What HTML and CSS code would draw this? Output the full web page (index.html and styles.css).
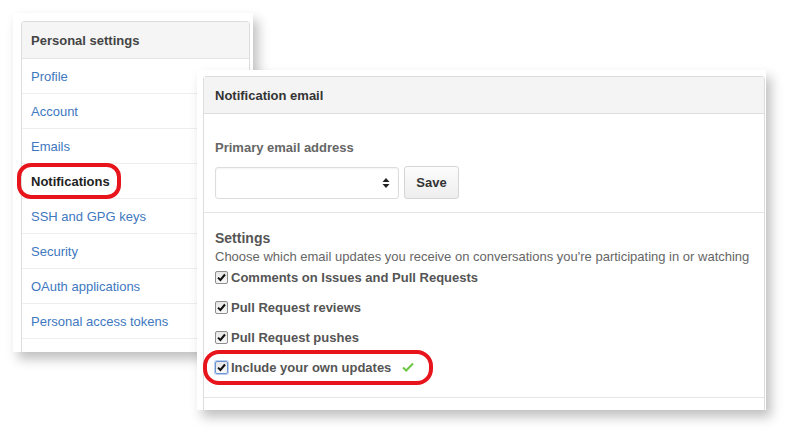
FILE: index.html
```html
<!DOCTYPE html>
<html>
<head>
<meta charset="utf-8">
<link rel="stylesheet" href="styles.css">
</head>
<body>
<div class="canvas">
  <div class="card card-left">
    <nav class="menu">
      <div class="menu-head">Personal settings</div>
      <a class="menu-item">Profile</a>
      <a class="menu-item">Account</a>
      <a class="menu-item">Emails</a>
      <a class="menu-item selected">Notifications</a>
      <a class="menu-item">SSH and GPG keys</a>
      <a class="menu-item">Security</a>
      <a class="menu-item">OAuth applications</a>
      <a class="menu-item">Personal access tokens</a>
      <a class="menu-item"></a>
    </nav>
  </div>

  <div class="card card-right">
    <div class="box">
      <div class="box-head">Notification email</div>
      <div class="box-section first">
        <div class="label">Primary email address</div>
        <div class="form-row">
          <div class="select">
            <svg class="updown" width="8" height="12" viewBox="0 0 8 12"><path d="M4 1 L7.5 5 H0.5 Z M4 11 L7.5 7 H0.5 Z" fill="#222"/></svg>
          </div>
          <button class="btn">Save</button>
        </div>
      </div>
      <div class="box-section second">
        <div class="sec-title">Settings</div>
        <div class="note">Choose which email updates you receive on conversations you're participating in or watching</div>
        <div class="check-row"><span class="cb"><svg width="9" height="9" viewBox="0 0 9 9"><path d="M1 4.6 L3.4 7 L8 1.5" stroke="#111" stroke-width="2" fill="none"/></svg></span>Comments on Issues and Pull Requests</div>
        <div class="check-row"><span class="cb"><svg width="9" height="9" viewBox="0 0 9 9"><path d="M1 4.6 L3.4 7 L8 1.5" stroke="#111" stroke-width="2" fill="none"/></svg></span>Pull Request reviews</div>
        <div class="check-row"><span class="cb"><svg width="9" height="9" viewBox="0 0 9 9"><path d="M1 4.6 L3.4 7 L8 1.5" stroke="#111" stroke-width="2" fill="none"/></svg></span>Pull Request pushes</div>
        <div class="check-row"><span class="cb focus"><svg width="9" height="9" viewBox="0 0 9 9"><path d="M1 4.6 L3.4 7 L8 1.5" stroke="#111" stroke-width="2" fill="none"/></svg></span>Include your own updates<svg class="ok" width="12" height="10" viewBox="0 0 12 10"><path d="M1 5.5 L4.2 8.5 L11 1.5" stroke="#6cc644" stroke-width="2" fill="none"/></svg></div>
      </div>
      <div class="box-section third"></div>
    </div>
  </div>

  <div class="mark mark-notif"></div>
  <div class="mark mark-include"></div>
</div>
</body>
</html>
```

FILE: styles.css
```css
* { box-sizing: border-box; }
html, body {
  margin: 0;
  padding: 0;
  background: #fff;
  font-family: "Liberation Sans", Arial, sans-serif;
  font-size: 13px;
}
.canvas {
  position: relative;
  width: 786px;
  height: 431px;
  overflow: hidden;
}
.card {
  position: absolute;
  background: #fff;
  overflow: hidden;
  box-shadow: 5px 7px 11px rgba(0, 0, 0, 0.25);
}
.card-left {
  left: 13px;
  top: 13px;
  width: 240px;
  height: 339px;
  padding: 8px 3px 0 8px;
}
.menu {
  display: flex;
  flex-direction: column;
  border: 1px solid #ddd;
  border-radius: 3px 3px 0 0;
}
.menu-head {
  height: 37px;
  padding: 0 9px;
  display: flex;
  align-items: center;
  background: #f5f5f5;
  border-bottom: 1px solid #e5e5e5;
  font-weight: bold;
  color: #444;
  font-size: 13px;
}
.menu-item {
  height: 35px;
  padding: 0 9px;
  display: flex;
  align-items: center;
  border-bottom: 1px solid #eee;
  color: #4078c0;
  text-decoration: none;
  flex: none;
}
.menu-item.selected {
  font-weight: bold;
  color: #222;
}
.card-right {
  left: 197px;
  top: 70px;
  width: 569px;
  height: 340px;
  padding: 6px 1px 0 6px;
}
.box {
  border: 1px solid #ddd;
  border-radius: 3px 3px 0 0;
}
.box-head {
  height: 37px;
  padding: 0 11px;
  display: flex;
  align-items: center;
  background: #f4f4f4;
  border-bottom: 1px solid #ddd;
  font-weight: bold;
  color: #333;
}
.box-section {
  padding: 0 11px;
  border-bottom: 1px solid #e5e5e5;
}
.box-section.first {
  height: 99px;
  padding-top: 26px;
}
.label {
  font-weight: bold;
  color: #666;
  height: 16px;
  line-height: 16px;
}
.form-row {
  display: flex;
  align-items: center;
  gap: 5px;
  margin-top: 10px;
}
.select {
  width: 184px;
  height: 32px;
  border: 1px solid #ddd;
  border-radius: 3px;
  display: flex;
  align-items: center;
  justify-content: flex-end;
  padding-right: 8px;
  box-shadow: inset 0 1px 2px rgba(0,0,0,0.05);
}
.btn {
  width: 55px;
  height: 33px;
  border: 1px solid #d5d5d5;
  border-radius: 3px;
  background: linear-gradient(#fcfcfc, #eee);
  font-family: inherit;
  font-size: 13px;
  font-weight: bold;
  color: #333;
  padding: 0;
}
.box-section.second {
  height: 185px;
  padding-top: 17px;
}
.sec-title {
  font-weight: bold;
  font-size: 14px;
  color: #555;
  height: 17px;
  line-height: 17px;
}
.note {
  color: #666;
  height: 17px;
  line-height: 17px;
  margin-top: 1px;
  white-space: nowrap;
}
.check-row {
  display: flex;
  align-items: center;
  font-weight: bold;
  color: #555;
  height: 14px;
  margin-bottom: 16px;
}
.note + .check-row { margin-top: 5px; }
.cb {
  width: 13px;
  height: 13px;
  border: 1px solid #8e8e8e;
  border-radius: 2px;
  background: linear-gradient(#e6e6e6, #f8f8f8);
  margin-right: 3px;
  display: flex;
  align-items: center;
  justify-content: center;
  flex: none;
}
.cb.focus {
  border-color: #6a93cf;
  box-shadow: 0 0 0 1px #b9cff0;
}
.ok { margin-left: 11px; }
.box-section.third { border-bottom: none; height: 20px; }
.mark {
  position: absolute;
  border: 4px solid #e8141c;
  border-radius: 14px;
}
.mark-notif {
  left: 17px;
  top: 163px;
  width: 104px;
  height: 36px;
}
.mark-include {
  left: 203px;
  top: 350px;
  width: 230px;
  height: 35px;
  border-radius: 16px;
}
```
